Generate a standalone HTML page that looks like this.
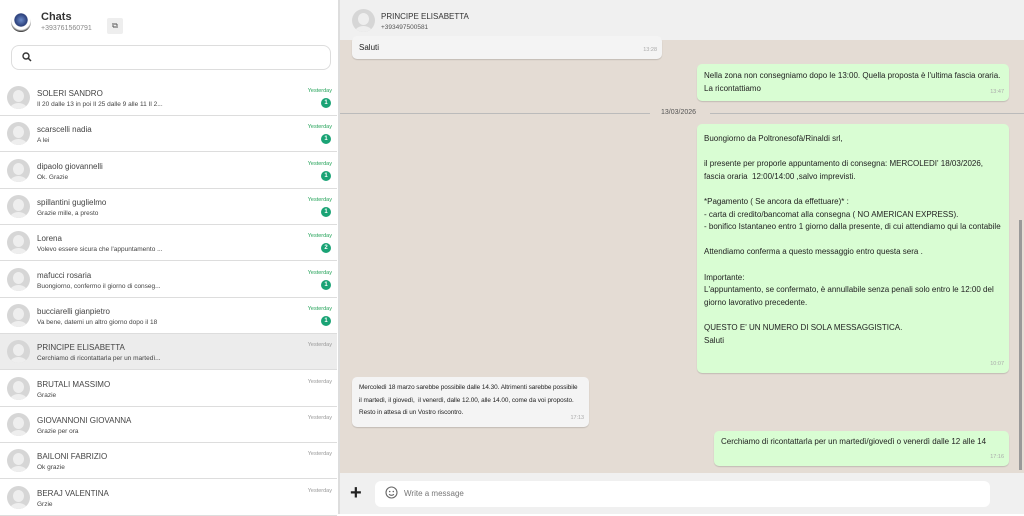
<!DOCTYPE html>
<html><head><meta charset="utf-8"><style>
*{box-sizing:border-box;margin:0;padding:0}
body{width:1024px;height:514px;overflow:hidden;font-family:"Liberation Sans",sans-serif;background:#fff;position:relative;color:#333}
.abs{position:absolute}
#left{left:0;top:0;width:338px;height:514px;background:#fff}
.av{position:absolute;width:23px;height:23px;border-radius:50%;background:#d6d6d6;overflow:hidden}
.av:before{content:"";position:absolute;left:6px;top:4px;width:11px;height:12px;border-radius:50%;background:#eee}
.av:after{content:"";position:absolute;left:3px;top:17px;width:17px;height:12px;border-radius:50%;background:#eee}
.row{position:absolute;left:0;width:337px;height:36px;border-bottom:1px solid #ddd}
.row .av{left:7px;top:6px}
.nm{position:absolute;left:37px;top:9px;font-size:8px;color:#444}
.pv{position:absolute;left:37px;top:21px;font-size:6.5px;color:#444;white-space:nowrap}
.tm{position:absolute;right:5px;top:8px;font-size:5.5px;color:#25a35a}
.tm.g{color:#999}
.bd{position:absolute;right:6px;top:18px;width:10px;height:10px;border-radius:50%;background:#1aa375;color:#fff;font-size:6px;text-align:center;line-height:10px;font-weight:bold}
#chat{left:340px;top:40px;width:684px;height:433px;background:#e4dcd4}
.b{position:absolute;font-size:8px;line-height:12.6px;color:#222;padding:6px 7px;border-radius:5px;box-shadow:0 1px 1px rgba(0,0,0,.15)}
.w{background:#f4f4f4}.gr{background:#d9fdd3}
.t{position:absolute;right:5px;bottom:2px;font-size:5.5px;color:#aaa}
</style></head><body>
<div id="left" class="abs">
 <div class="abs" style="left:11px;top:12px;width:20px;height:20px;border-radius:50%;background:radial-gradient(circle at 50% 40%,#6a8ac8 0,#2b3f7a 40%,#fff 45%,#fff 60%,#333 75%)"></div>
 <div class="abs" style="left:41px;top:11px;font-size:11px;font-weight:bold;color:#333">Chats</div>
 <div class="abs" style="left:41px;top:25px;font-size:7px;color:#888">+393761560791</div>
 <div class="abs" style="left:107px;top:18px;width:16px;height:16px;background:#eee;border-radius:2px;font-size:8px;text-align:center;line-height:16px;color:#555">⧉</div>
 <div class="abs" style="left:11px;top:45px;width:320px;height:25px;border:1px solid #ddd;border-radius:8px"></div>
 <svg class="abs" style="left:22px;top:52px" width="10" height="10" viewBox="0 0 10 10"><circle cx="4" cy="4" r="3" fill="none" stroke="#333" stroke-width="1.4"/><path d="M6.3 6.3L9 9" stroke="#333" stroke-width="1.5"/></svg>
 <div class="abs" style="left:338px;top:80px;width:3px;height:170px;background:#bbb"></div>
 <div class="row" style="top:80px"><div class="av"></div><div class="nm">SOLERI SANDRO</div><div class="pv">Il 20 dalle 13 in poi Il 25 dalle 9 alle 11 Il 2...</div><div class="tm">Yesterday</div><div class="bd">1</div></div>
 <div class="row" style="top:116px"><div class="av"></div><div class="nm">scarscelli nadia</div><div class="pv">A lei</div><div class="tm">Yesterday</div><div class="bd">1</div></div>
 <div class="row" style="top:153px"><div class="av"></div><div class="nm">dipaolo giovannelli</div><div class="pv">Ok. Grazie</div><div class="tm">Yesterday</div><div class="bd">1</div></div>
 <div class="row" style="top:189px"><div class="av"></div><div class="nm">spillantini guglielmo</div><div class="pv">Grazie mille, a presto</div><div class="tm">Yesterday</div><div class="bd">1</div></div>
 <div class="row" style="top:225px"><div class="av"></div><div class="nm">Lorena</div><div class="pv">Volevo essere sicura che l'appuntamento ...</div><div class="tm">Yesterday</div><div class="bd">2</div></div>
 <div class="row" style="top:262px"><div class="av"></div><div class="nm">mafucci rosaria</div><div class="pv">Buongiorno, confermo il giorno di conseg...</div><div class="tm">Yesterday</div><div class="bd">1</div></div>
 <div class="row" style="top:298px"><div class="av"></div><div class="nm">bucciarelli gianpietro</div><div class="pv">Va bene, datemi un altro giorno dopo il 18</div><div class="tm">Yesterday</div><div class="bd">1</div></div>
 <div class="row" style="top:334px;background:#ececec"><div class="av"></div><div class="nm">PRINCIPE ELISABETTA</div><div class="pv">Cerchiamo di ricontattarla per un martedì...</div><div class="tm g">Yesterday</div></div>
 <div class="row" style="top:371px"><div class="av"></div><div class="nm">BRUTALI MASSIMO</div><div class="pv">Grazie</div><div class="tm g">Yesterday</div></div>
 <div class="row" style="top:407px"><div class="av"></div><div class="nm">GIOVANNONI GIOVANNA</div><div class="pv">Grazie per ora</div><div class="tm g">Yesterday</div></div>
 <div class="row" style="top:443px"><div class="av"></div><div class="nm">BAILONI FABRIZIO</div><div class="pv">Ok grazie</div><div class="tm g">Yesterday</div></div>
 <div class="row" style="top:480px"><div class="av"></div><div class="nm">BERAJ VALENTINA</div><div class="pv">Grzie</div><div class="tm g">Yesterday</div></div>
</div>
<div class="abs" style="left:338px;top:0;width:2px;height:514px;background:#ddd"></div>
<div class="abs" style="left:340px;top:0;width:684px;height:40px;background:#f0f0f0">
 <div class="av" style="left:12px;top:9px"></div>
 <div class="abs" style="left:41px;top:12px;font-size:8px;color:#333">PRINCIPE ELISABETTA</div>
 <div class="abs" style="left:41px;top:24px;font-size:6.5px;color:#555">+393497500581</div>
</div>
<div id="chat" class="abs">
 <div class="b w" style="left:12px;top:-4px;width:310px;height:23px;padding-top:6px">Saluti<span class="t">13:28</span></div>
 <div class="b gr" style="left:357px;top:24px;width:312px;height:37px">Nella zona non consegniamo dopo le 13:00. Quella proposta è l'ultima fascia oraria. La ricontattiamo<span class="t">13:47</span></div>
 <div class="abs" style="left:0;top:73px;width:310px;height:1px;background:#bbb"></div>
 <div class="abs" style="left:370px;top:73px;width:314px;height:1px;background:#bbb"></div>
 <div class="abs" style="left:321px;top:69px;font-size:7px;color:#555">13/03/2026</div>
 <div class="b gr" style="left:357px;top:84px;width:312px;height:249px;padding-top:9px">Buongiorno da Poltronesofà/Rinaldi srl,<br><br>il presente per proporle appuntamento di consegna: MERCOLEDI' 18/03/2026, fascia oraria&nbsp; 12:00/14:00 ,salvo imprevisti.<br><br>*Pagamento ( Se ancora da effettuare)* :<br>- carta di credito/bancomat alla consegna ( NO AMERICAN EXPRESS).<br>- bonifico Istantaneo entro 1 giorno dalla presente, di cui attendiamo qui la contabile<br><br>Attendiamo conferma a questo messaggio entro questa sera .<br><br>Importante:<br>L'appuntamento, se confermato, è annullabile senza penali solo entro le 12:00 del giorno lavorativo precedente.<br><br>QUESTO E' UN NUMERO DI SOLA MESSAGGISTICA.<br>Saluti<span class="t">10:07</span></div>
 <div class="b w" style="left:12px;top:337px;width:237px;height:50px;padding-top:5px;font-size:6.4px;letter-spacing:-0.05px;white-space:nowrap;overflow:hidden">Mercoledì 18 marzo sarebbe possibile dalle 14.30. Altrimenti sarebbe possibile<br>il martedì, il giovedì,&nbsp; il venerdì, dalle 12.00, alle 14.00, come da voi proposto.<br>Resto in attesa di un Vostro riscontro.<span class="t">17:13</span></div>
 <div class="b gr" style="left:374px;top:391px;width:295px;height:35px;padding-top:5px">Cerchiamo di ricontattarla per un martedì/giovedì o venerdì dalle 12 alle 14<span class="t">17:16</span></div>
 <div class="abs" style="left:679px;top:180px;width:3px;height:250px;background:#999"></div>
</div>
<div class="abs" style="left:340px;top:473px;width:684px;height:41px;background:#f0f0f0">
 <div class="abs" style="left:10px;top:10px;font-size:20px;line-height:20px;font-weight:bold;color:#222">+</div>
 <div class="abs" style="left:35px;top:8px;width:615px;height:26px;background:#fff;border-radius:6px"></div>
 <svg class="abs" style="left:45px;top:13px" width="13" height="13" viewBox="0 0 13 13"><circle cx="6.5" cy="6.5" r="5.5" fill="none" stroke="#666" stroke-width="1.1"/><circle cx="4.7" cy="5.5" r=".8" fill="#666"/><circle cx="8.3" cy="5.5" r=".8" fill="#666"/><path d="M4 8.3q2.5 2 5 0" fill="none" stroke="#666"/></svg>
 <div class="abs" style="left:64px;top:16px;font-size:8px;color:#777">Write a message</div>
</div>
</body></html>
